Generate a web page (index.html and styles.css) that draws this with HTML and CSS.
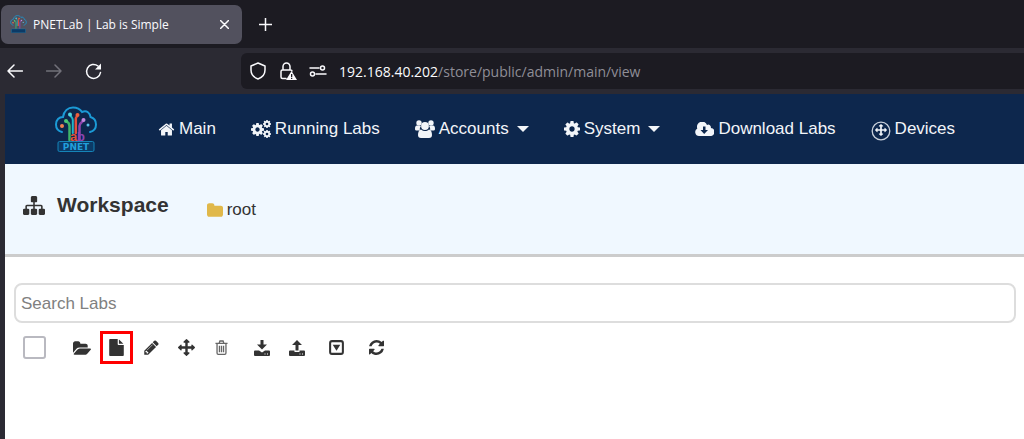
FILE: index.html
```html
<!DOCTYPE html>
<html lang="en">

<head>
  <meta charset="UTF-8">
  <meta name="viewport" content="width=device-width, initial-scale=1.0">
  <title>PNETLab | Lab is Simple</title>
  <link rel="stylesheet" href="styles.css">
</head>

<body>
  <svg class="sprite" aria-hidden="true">
    <symbol id="tree" viewBox="0 0 42 46">
      <g fill="none" stroke-linecap="round">
        <path stroke="#1b9ad6" stroke-width="2" d="M7 26C3 25 1 22 1 18.500C1 14 4 11 8 11C9 5 13 1.500 18 1.500C22 1.500 25 3 27 6C32 4 35 7 35.500 11C39 12 41 15 41 18.500C41 22 39 25 35 26"/>
        <path stroke="#3fb568" stroke-width="2.500" d="M14.500 34V20C14.500 17 13 16 11 15"/>
        <path stroke="#22b5c9" stroke-width="2" d="M17.800 27V14C17.800 12 16 11 15 9"/>
        <path stroke="#e2503a" stroke-width="2.500" d="M20.800 27V13C20.800 11 22 11 22 10"/>
        <path stroke="#8e44ad" stroke-width="2.500" d="M24.500 34V20C24.500 17 27 16 28 15"/>
      </g>
      <circle cx="7" cy="20" r="2" fill="#f08050"/>
      <circle cx="11" cy="15" r="2" fill="#4fc878"/>
      <circle cx="15" cy="8.500" r="2" fill="#4fd5e0"/>
      <circle cx="22.500" cy="9" r="2" fill="#f0603a"/>
      <circle cx="28.500" cy="14" r="2" fill="#c58ae0"/>
      <circle cx="33" cy="19" r="1.500" fill="#5bc0e8"/>
      <rect x="3" y="35.500" width="36" height="10" rx="1.500" fill="#0c3a66" stroke="#1584b8"/>
    </symbol>
    <symbol id="home" viewBox="0 0 1792 1792"><path d="M1472 992v480q0 26-19 45t-45 19h-384v-384h-256v384h-384q-26 0-45-19t-19-45v-480q0-1 .5-3t.5-3l575-474 575 474q1 2 1 6zm223-69l-62 74q-8 9-21 11h-3q-13 0-21-7l-692-577-692 577q-12 8-24 7-13-2-21-11l-62-74q-8-10-7-23.500t11-21.500l719-599q32-26 76-26t76 26l244 204v-195q0-14 9-23t23-9h192q14 0 23 9t9 23v408l219 182q10 8 11 21.500t-7 23.500z"/></symbol>
    <symbol id="cog" viewBox="128 128 1536 1536"><path d="M1152 896q0-106-75-181t-181-75-181 75-75 181 75 181 181 75 181-75 75-181zm512-109v222q0 12-8 23t-20 13l-185 28q-19 54-39 91 35 50 107 138 10 12 10 25t-9 23q-27 37-99 108t-94 71q-12 0-26-9l-138-108q-44 23-91 38-16 136-29 186-7 28-36 28h-222q-14 0-24.500-8.500t-11.500-21.500l-28-184q-49-16-90-37l-141 107q-10 9-25 9-14 0-25-11-126-114-165-168-7-10-7-23 0-12 8-23 15-21 51-66.500t54-70.500q-27-50-41-99l-183-27q-13-2-21-12.500t-8-23.500v-222q0-12 8-23t19-13l186-28q14-46 39-92-40-57-107-138-10-12-10-24 0-10 9-23 26-36 98.500-107.500t94.500-71.500q13 0 26 10l138 107q44-23 91-38 16-136 29-186 7-28 36-28h222q14 0 24.500 8.500t11.500 21.500l28 184q49 16 90 37l142-107q9-9 24-9 13 0 25 10 129 119 165 170 7 8 7 22 0 12-8 23-15 21-51 66.500t-54 70.500q26 50 41 98l183 28q13 2 21 12.500t8 23.500z"/></symbol>
    <symbol id="cogs" viewBox="0 0 20 18">
      <use href="#cog" x="0" y="3" width="13" height="13"/>
      <use href="#cog" x="12" y="0" width="8" height="8"/>
      <use href="#cog" x="12" y="10" width="8" height="8"/>
    </symbol>
    <symbol id="users" viewBox="0 0 20 18">
      <circle cx="4" cy="3" r="2.700"/><circle cx="16" cy="3" r="2.700"/>
      <path d="M2 5.500C.5 5.500 0 7 0 9c0 1 .7 1.500 2 1.500h3C4.500 9 5 7 6 6zM18 5.500c1.500 0 2 1.500 2 3.500 0 1-.7 1.500-2 1.500h-3C15.500 9 15 7 14 6z"/>
      <circle cx="10" cy="6" r="3.900"/>
      <path d="M6 9.500C4 9.500 3 12 3 15c0 2 1 3 3 3h8c2 0 3-1 3-3 0-3-1-5.500-3-5.500-2.500 2-5.500 2-8 0z"/>
    </symbol>
    <symbol id="cloud" viewBox="0 0 19 14"><path fill-rule="evenodd" d="M4 14a4 4 0 0 1-1.700-7.500A5 5 0 0 1 12 3a2.600 2.600 0 0 1 3.800 3A4 4 0 0 1 15 14zM8 4.500V8H5.500l3.700 4 3.800-4h-2.500V4.500z"/></symbol>
    <symbol id="arrows" viewBox="0 0 1792 1792"><path d="M1792 896q0 26-19 45l-256 256q-19 19-45 19t-45-19-19-45v-128h-384v384h128q26 0 45 19t19 45-19 45l-256 256q-19 19-45 19t-45-19l-256-256q-19-19-19-45t19-45 45-19h128v-384h-384v128q0 26-19 45t-45 19-45-19l-256-256q-19-19-19-45t19-45l256-256q19-19 45-19t45 19 19 45v128h384v-384h-128q-26 0-45-19t-19-45 19-45l256-256q19-19 45-19t45 19l256 256q19 19 19 45t-19 45-45 19h-128v384h384v-128q0-26 19-45t45-19 45 19l256 256q19 19 19 45z"/></symbol>
    <symbol id="device" viewBox="0 0 20 20">
      <circle cx="10" cy="10" r="8.800" fill="none" stroke="#c9d1dc" stroke-width="1.300"/>
      <use href="#arrows" x="4" y="3" width="12" height="12"/>
    </symbol>
    <symbol id="sitemap" viewBox="0 128 1792 1536"><path d="M1792 1248v320q0 40-28 68t-68 28h-320q-40 0-68-28t-28-68v-320q0-40 28-68t68-28h96v-192h-512v192h96q40 0 68 28t28 68v320q0 40-28 68t-68 28h-320q-40 0-68-28t-28-68v-320q0-40 28-68t68-28h96v-192h-512v192h96q40 0 68 28t28 68v320q0 40-28 68t-68 28h-320q-40 0-68-28t-28-68v-320q0-40 28-68t68-28h96v-192q0-52 38-90t90-38h512v-192h-96q-40 0-68-28t-28-68v-320q0-40 28-68t68-28h320q40 0 68 28t28 68v320q0 40-28 68t-68 28h-96v192h512q52 0 90 38t38 90v192h96q40 0 68 28t28 68z"/></symbol>
    <symbol id="folder" viewBox="64 128 1664 1408"><path d="M1728 608v704q0 92-66 158t-158 66h-1216q-92 0-158-66t-66-158v-960q0-92 66-158t158-66h320q92 0 158 66t66 158v32h672q92 0 158 66t66 158z"/></symbol>
    <symbol id="folder-open" viewBox="-64 0 1880 1664"><path d="M1815 952q0 31-31 66l-336 396q-43 51-120.500 86.500t-143.500 35.500h-1088q-34 0-60.500-13t-26.500-43q0-31 31-66l336-396q43-51 120.500-86.500t143.500-35.500h1088q34 0 60.500 13t26.500 43zm-343-344v160h-832q-94 0-197 47.500t-164 119.500l-337 396-5 6q0-4-.5-12.500t-.5-12.500v-960q0-92 66-158t158-66h320q92 0 158 66t66 158v32h544q92 0 158 66t66 158z"/></symbol>
    <symbol id="file" viewBox="0 0 1792 1792"><path d="M1152 512v-472q22 14 36 28l408 408q14 14 28 36h-472zm-128 32q0 40 28 68t68 28h544v1056q0 40-28 68t-68 28h-1344q-40 0-68-28t-28-68v-1600q0-40 28-68t68-28h800v544z"/></symbol>
    <symbol id="pencil" viewBox="100 100 1592 1592"><path d="M491 1536l91-91-235-235-91 91v107h128v128h107zm523-928q0-22-22-22-10 0-17 7l-542 542q-7 7-7 17 0 22 22 22 10 0 17-7l542-542q7-7 7-17zm-54-192l416 416-832 832h-416v-416zm683 96q0 53-37 90l-166 166-416-416 166-165q36-38 90-38 53 0 91 38l235 234q37 39 37 91z"/></symbol>
    <symbol id="trash" viewBox="0 0 14 16">
      <path fill="none" stroke="currentColor" stroke-width="1.400" d="M.5 3.500h13M4.500 3.500l.8-2.500h3.400l.8 2.500M2.200 3.500v10.300c0 1 .5 1.500 1.300 1.500h7c.8 0 1.300-.5 1.300-1.500V3.500M4.800 6v7M7 6v7M9.200 6v7"/>
    </symbol>
    <symbol id="download" viewBox="0 0 16 16">
      <path d="M6.500 0h3v4.500H13l-5 5-5-5h3.500z"/>
      <path fill-rule="evenodd" d="M1 10.500h4l3 2 3-2h4q1 0 1 1V15q0 1-1 1H1q-1 0-1-1v-3.500q0-1 1-1zM10.500 13.500v1h1v-1zM13 13.500v1h1v-1z"/>
    </symbol>
    <symbol id="upload" viewBox="0 0 16 16">
      <path d="M8 0l5 5H9.500v5.500h-3V5H3z"/>
      <path fill-rule="evenodd" d="M1 10.500h4.500V12h5v-1.500H15q1 0 1 1V15q0 1-1 1H1q-1 0-1-1v-3.500q0-1 1-1zM10.500 13.500v1h1v-1zM13 13.500v1h1v-1z"/>
    </symbol>
    <symbol id="caret-box" viewBox="0 0 16 16">
      <rect x="1.200" y="1.200" width="13.600" height="13.600" rx="2" fill="none" stroke="currentColor" stroke-width="2.200"/>
      <path d="M4 5h8L8 11.500z"/>
    </symbol>
    <symbol id="refresh" viewBox="128 128 1536 1536"><path d="M1639 1056q0 5-1 7-64 268-268 434.500t-478 166.500q-146 0-282.500-55t-243.500-157l-129 129q-19 19-45 19t-45-19-19-45v-448q0-26 19-45t45-19h448q26 0 45 19t19 45-19 45l-137 137q71 66 161 102t187 36q134 0 250-65t186-179q11-17 53-117 8-23 30-23h192q13 0 22.500 9.500t9.500 22.500zm25-800v448q0 26-19 45t-45 19h-448q-26 0-45-19t-19-45 19-45l138-138q-148-137-349-137-134 0-250 65t-186 179q-11 17-53 117-8 23-30 23h-199q-13 0-22.500-9.500t-9.500-22.500v-7q65-268 270-434.500t480-166.500q146 0 284 55.500t245 156.500l130-129q19-19 45-19t45 19 19 45z"/></symbol>
  </svg>

  <div class="tabs">
    <div class="tab">
      <svg class="favicon"><use href="#tree"/></svg>
      <span class="tab-title">PNETLab | Lab is Simple</span>
      <button class="tab-close" aria-label="Close tab">
        <svg width="9" height="9" viewBox="0 0 9 9"><path class="line" d="M.5.5l8 8M8.500.5l-8 8"/></svg>
      </button>
    </div>
    <button class="tab-new" aria-label="New tab">
      <svg width="13" height="13" viewBox="0 0 13 13"><path class="line" d="M6.500 0v13M0 6.500h13"/></svg>
    </button>
  </div>

  <div class="toolbar">
    <div class="history">
      <button aria-label="Back"><svg width="16" height="14" viewBox="0 0 16 14"><path class="line" d="M15.500 7H1M7 1L1 7l6 6"/></svg></button>
      <button aria-label="Forward" disabled><svg width="16" height="14" viewBox="0 0 16 14"><path class="line" d="M.5 7H15M9 1l6 6-6 6"/></svg></button>
      <button aria-label="Reload"><svg width="17" height="17" viewBox="0 0 17 17"><path class="line" d="M15.500 9.500A7 7 0 1 1 13 3"/><path d="M16 .5V6.500h-6z"/></svg></button>
    </div>
    <div class="address">
      <svg width="18" height="18" viewBox="0 0 18 18"><path class="line" d="M9 1l7 3v4c0 4-3 7.500-7 9-4-1.500-7-5-7-9V4z"/></svg>
      <svg width="18" height="18" viewBox="0 0 18 18"><path class="line" d="M7 16.500H3.500Q2 16.500 2 15V9.500Q2 8 3.500 8h8Q13 8 13 9M4 8V4.500a3.500 3.500 0 0 1 7 0V8"/><path fill-rule="evenodd" d="M12.500 9L18 18H7zM12 12v3h1.300v-3zM12 15.800V17h1.300v-1.200z"/></svg>
      <svg width="18" height="12" viewBox="0 0 18 12"><path class="line" d="M1 3h9M7 9h10"/><circle class="line" cx="13.500" cy="3" r="2"/><circle class="line" cx="3.500" cy="9" r="2"/></svg>
      <span class="url"><b>192.168.40.202</b>/store/public/admin/main/view</span>
    </div>
  </div>

  <div class="page">
    <nav class="nav">
      <a href="#" class="brand" aria-label="PNETLab">
        <svg viewBox="0 0 42 46">
          <use href="#tree"/>
          <text x="15" y="35" class="logo-lab" fill="#e2503a">a</text>
          <text x="22" y="35" class="logo-lab" fill="#8e44ad">b</text>
          <text x="21" y="44" class="logo-name" fill="#22a0dc" text-anchor="middle">PNET</text>
        </svg>
      </a>
      <a href="#"><svg width="17" height="17"><use href="#home"/></svg>Main</a>
      <a href="#"><svg width="20" height="18"><use href="#cogs"/></svg>Running Labs</a>
      <a href="#"><svg width="20" height="18"><use href="#users"/></svg>Accounts<i class="caret"></i></a>
      <a href="#"><svg width="16" height="16"><use href="#cog"/></svg>System<i class="caret"></i></a>
      <a href="#"><svg width="19" height="14"><use href="#cloud"/></svg>Download Labs</a>
      <a href="#"><svg width="20" height="24" viewBox="0 0 20 24"><use href="#device" y="4" width="20" height="20"/></svg>Devices</a>
    </nav>

    <header class="head">
      <svg width="22" height="19"><use href="#sitemap"/></svg>
      <h1>Workspace</h1>
      <a href="#" class="path"><svg width="16" height="14"><use href="#folder"/></svg>root</a>
    </header>

    <main class="labs">
      <input class="search" type="text" placeholder="Search Labs" aria-label="Search Labs">
      <div class="actions">
        <input class="check" type="checkbox" aria-label="Select all">
        <div class="group">
          <button aria-label="Open folder"><svg width="18" height="16"><use href="#folder-open"/></svg></button>
          <button class="marked" aria-label="New lab"><svg width="17" height="17"><use href="#file"/></svg></button>
          <button aria-label="Rename"><svg width="15" height="15"><use href="#pencil"/></svg></button>
          <button aria-label="Move"><svg width="17" height="17"><use href="#arrows"/></svg></button>
          <button class="light" aria-label="Delete"><svg width="13" height="15"><use href="#trash"/></svg></button>
        </div>
        <div class="group">
          <button aria-label="Import"><svg width="16" height="16"><use href="#download"/></svg></button>
          <button aria-label="Export"><svg width="16" height="16"><use href="#upload"/></svg></button>
        </div>
        <button aria-label="More"><svg width="15" height="15"><use href="#caret-box"/></svg></button>
        <button aria-label="Refresh"><svg width="15" height="15"><use href="#refresh"/></svg></button>
      </div>
    </main>
  </div>
</body>

</html>
```

FILE: styles.css
```css
* {
  box-sizing: border-box;
}

body {
  margin: 0;
  min-height: 100vh;
  display: flex;
  flex-direction: column;
  font-family: "Liberation Sans", Arial, sans-serif;
  font-size: 17px;
  color: #333;
  background-color: #2b2a33;
}

button {
  padding: 0;
  border: 0;
  display: flex;
  align-items: center;
  justify-content: center;
  color: inherit;
  background: none;
}

a {
  color: inherit;
  text-decoration: none;
}

svg {
  flex: none;
  fill: currentColor;
}

.sprite {
  position: absolute;
  width: 0;
  height: 0;
}

.line {
  fill: none;
  stroke: currentColor;
  stroke-width: 1.5;
  stroke-linecap: round;
  stroke-linejoin: round;
}

.logo-lab {
  font: bold 13px "Liberation Sans", sans-serif;
}

.logo-name {
  font: bold 9px "DejaVu Sans", sans-serif;
}

/* browser tabs */
.tabs {
  display: flex;
  align-items: center;
  gap: 17px;
  height: 48px;
  padding-left: 1px;
  color: #fbfbfe;
  background-color: #1c1b22;
}

.tab {
  display: flex;
  align-items: center;
  gap: 6px;
  width: 241px;
  height: 39px;
  padding: 0 13px 0 9px;
  border-radius: 7px;
  background-color: #52515e;
}

.favicon {
  width: 17px;
  height: 18px;
}

.tab-title {
  flex: 1;
  font-family: "Open Sans", sans-serif;
  font-size: 12px;
  white-space: nowrap;
}

/* address row */
.toolbar {
  display: flex;
  align-items: center;
  height: 46px;
  color: #fbfbfe;
}

.history {
  display: flex;
  gap: 23px;
  width: 241px;
  padding-left: 7px;
}

.history button:disabled {
  color: #72717a;
}

.address {
  flex: 1;
  display: flex;
  align-items: center;
  gap: 12px;
  height: 36px;
  padding-left: 8px;
  border-radius: 6px 0 0 6px;
  background-color: #1c1b22;
}

.url {
  font-family: "Open Sans", sans-serif;
  font-size: 14px;
  color: #8f8e97;
}

.url b {
  font-weight: normal;
  color: #fbfbfe;
}

/* page */
.page {
  flex: 1;
  margin-left: 5px;
  background-color: #fff;
}

.nav {
  display: flex;
  align-items: center;
  gap: 35px;
  height: 70px;
  padding-left: 50px;
  color: #f2f5f9;
  background-color: #0d274d;
}

.nav a {
  display: flex;
  align-items: center;
  gap: 4px;
  white-space: nowrap;
}

.nav .brand {
  margin-right: 26px;
}

.brand svg {
  width: 42px;
  height: 46px;
}

.caret {
  margin-left: 4px;
  border: 6px solid transparent;
  border-top-color: currentColor;
  border-bottom: 0;
}

.head {
  display: flex;
  align-items: center;
  height: 93px;
  padding: 0 18px 8px;
  border-bottom: 3px solid #ccc;
  background-color: #f0f8ff;
}

.head h1 {
  margin: 0 38px 0 12px;
  font-size: 21px;
}

.path {
  display: flex;
  align-items: center;
  gap: 4px;
  padding-top: 10px;
}

.path svg {
  color: #e0b84a;
}

.labs {
  padding: 26px 8px 0 9px;
}

.search {
  display: block;
  width: 100%;
  height: 40px;
  padding: 2px 5px 0;
  border: 2px solid #ddd;
  border-radius: 8px;
  font: inherit;
}

.search::placeholder {
  color: #808080;
}

.actions {
  display: flex;
  align-items: center;
  gap: 7px;
  margin-top: 8px;
  padding-left: 9px;
}

.actions .check {
  appearance: none;
  width: 23px;
  height: 23px;
  margin: 0 12px 0 0;
  border: 2px solid #b9b9c0;
  border-radius: 3px;
}

.group {
  display: flex;
  gap: 2px;
}

.actions button {
  width: 33px;
  height: 33px;
}

.actions .marked {
  border: 3px solid #f00;
}

.actions .light {
  color: #666;
}
```
